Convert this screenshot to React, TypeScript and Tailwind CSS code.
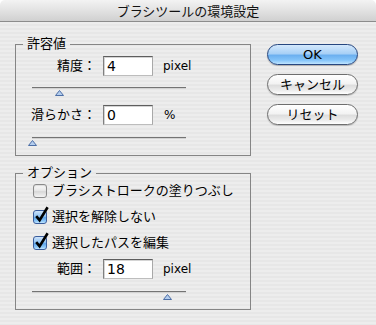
import React from "react";

function Field({ value }: { value: string }) {
  return (
    <div className="w-[50px] h-[20px] bg-white border border-t-[#5e5e5e] border-l-[#808080] border-r-[#a8a8a8] border-b-[#bdbdbd] shadow-[inset_1px_1px_0_#d4d4d4] text-[14px] leading-[18px] pl-[3px] text-black">
      {value}
    </div>
  );
}

function Thumb({ cls }: { cls: string }) {
  return (
    <svg className={"absolute top-[3px] " + cls} width="9" height="6" viewBox="0 0 9 6">
      <polygon points="4.5,0.5 8.5,5.5 0.5,5.5" fill="#b3cdee" stroke="#4d6fa6" strokeWidth="1" />
    </svg>
  );
}

function Slider({ children, mt }: { children: React.ReactNode; mt: string }) {
  return (
    <div className={"relative ml-[16px] w-[154px] h-[9px] " + mt}>
      <div className="h-px bg-[#747474]" />
      <div className="h-px bg-[#d2d2d2]" />
      {children}
    </div>
  );
}

function Label({ text }: { text: string }) {
  return <div className="w-[65px] text-right text-[13px] leading-[20px]">{text}</div>;
}

function Check({ checked }: { checked: boolean }) {
  if (!checked) {
    return (
      <span className="block w-[14px] h-[14px] rounded-[3px] border border-[#8a8a8a] bg-[linear-gradient(to_bottom,#fafafa_0%,#e6e6e6_50%,#d8d8d8_55%,#f4f4f4_100%)] shadow-[inset_0_1px_1px_rgba(0,0,0,0.12)]" />
    );
  }
  return (
    <span className="relative block w-[14px] h-[14px]">
      <span className="block w-[14px] h-[14px] rounded-[3px] border border-[#3a5d9c] bg-[linear-gradient(to_bottom,#cfe4fb_0%,#8fc2f3_45%,#5ea4ea_55%,#8fcaf9_85%,#c4e6ff_100%)]" />
      <svg className="absolute top-[-4px] left-[1px]" width="16" height="17" viewBox="0 0 16 17">
        <path d="M2.2 10.2 L5.6 14.2 L13.6 1.2" fill="none" stroke="#000" strokeWidth="2.6" strokeLinecap="butt" strokeLinejoin="miter" />
      </svg>
    </span>
  );
}

export default function App() {
  return (
    <div className="w-[376px] h-[325px] overflow-hidden bg-white font-['DejaVu_Sans','Noto_Sans_CJK_JP',sans-serif] text-black">
      <div className="h-[22px] rounded-t-[5px] bg-[linear-gradient(to_bottom,#f3f3f3_0%,#e2e2e2_50%,#d0d0d0_100%)] border-b border-[#8c8c8c] text-center text-[13px] leading-[21px] font-['Noto_Sans_CJK_JP',sans-serif] text-[#111]">
        ブラシツールの環境設定
      </div>
      <div className="flex h-[303px] bg-[repeating-linear-gradient(to_bottom,#ededed_0px,#ededed_2px,#e7e7e7_2px,#e7e7e7_4px)]">
        <div className="pl-[15px] pt-[14px]">
          <fieldset className="w-[236px] border border-[#858585] pb-[9px]">
            <legend className="ml-[7px] px-[4px] text-[13px] leading-[16px]">許容値</legend>
            <div className="pl-[15px] pt-[4px]">
              <div className="flex items-center h-[20px]">
                <Label text="精度：" />
                <div className="ml-[7px]"><Field value="4" /></div>
                <div className="ml-[10px] text-[12px] leading-[20px]">pixel</div>
              </div>
            </div>
            <Slider mt="mt-[11px]"><Thumb cls="left-[23px]" /></Slider>
            <div className="pl-[15px] mt-[9px]">
              <div className="flex items-center h-[20px]">
                <Label text="滑らかさ：" />
                <div className="ml-[7px]"><Field value="0" /></div>
                <div className="ml-[11px] text-[12px] leading-[20px]">%</div>
              </div>
            </div>
            <Slider mt="mt-[12px]"><Thumb cls="left-[-4px]" /></Slider>
          </fieldset>

          <fieldset className="mt-[9px] w-[236px] border border-[#858585] pb-[9px]">
            <legend className="ml-[7px] px-[4px] text-[13px] leading-[16px]">オプション</legend>
            <div className="flex flex-col gap-[6px] pl-[17px]">
              <div className="flex items-center h-[20px] gap-[5px] text-[13px]">
                <Check checked={false} />
                <span>ブラシストロークの塗りつぶし</span>
              </div>
              <div className="flex items-center h-[20px] gap-[5px] text-[13px]">
                <Check checked={true} />
                <span>選択を解除しない</span>
              </div>
              <div className="flex items-center h-[20px] gap-[5px] text-[13px]">
                <Check checked={true} />
                <span>選択したパスを編集</span>
              </div>
            </div>
            <div className="pl-[15px] mt-[6px]">
              <div className="flex items-center h-[20px]">
                <Label text="範囲：" />
                <div className="ml-[7px]"><Field value="18" /></div>
                <div className="ml-[10px] text-[12px] leading-[20px]">pixel</div>
              </div>
            </div>
            <Slider mt="mt-[12px]"><Thumb cls="left-[131px]" /></Slider>
          </fieldset>
        </div>

        <div className="ml-[16px] pt-[22px] flex flex-col gap-[9px]">
          <div className="w-[91px] h-[21px] rounded-full border border-[#26467f] bg-[linear-gradient(to_bottom,#d3e8fc_0%,#a8d0f6_45%,#6cb0f0_55%,#84c4f9_80%,#bfe4ff_100%)] shadow-[0_1px_1px_rgba(0,0,0,0.25)] text-center text-[13px] leading-[19px]">
            OK
          </div>
          <div className="w-[91px] h-[21px] rounded-full border border-[#6e6e6e] bg-[linear-gradient(to_bottom,#ffffff_0%,#f3f3f3_45%,#dedede_55%,#ececec_80%,#ffffff_100%)] shadow-[0_1px_1px_rgba(0,0,0,0.2)] text-center text-[13px] leading-[19px]">
            キャンセル
          </div>
          <div className="w-[91px] h-[21px] rounded-full border border-[#6e6e6e] bg-[linear-gradient(to_bottom,#ffffff_0%,#f3f3f3_45%,#dedede_55%,#ececec_80%,#ffffff_100%)] shadow-[0_1px_1px_rgba(0,0,0,0.2)] text-center text-[13px] leading-[19px]">
            リセット
          </div>
        </div>
      </div>
    </div>
  );
}
